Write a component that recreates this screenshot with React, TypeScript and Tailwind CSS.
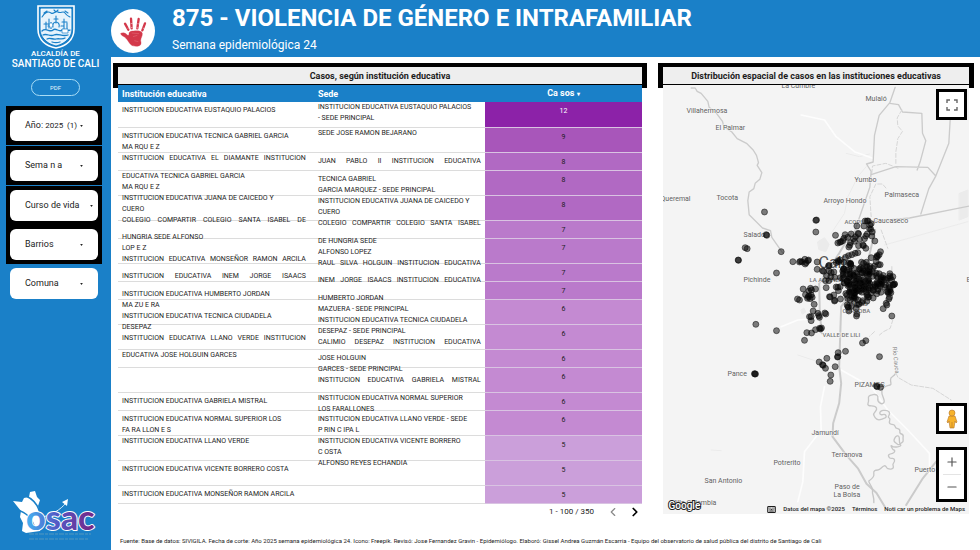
import React from 'react';
import { ChevronLeft, ChevronRight, Keyboard, Minus, Plus } from 'lucide-react';

interface Line {
  text: string;
  spread?: boolean;
}

interface Cell {
  pad: string;
  lines: Line[];
}

interface Row {
  tall: boolean;
  school?: Cell;
  site?: Cell;
  cases: number;
}

// Lines that start with "=" are spread over the full column width
const cell = (pad: string, ...texts: string[]): Cell => ({
  pad,
  lines: texts.map(t => (t.startsWith('=') ? { text: t.slice(1), spread: true } : { text: t })),
});

const rows: Row[] = [
  {
    tall: true,
    school: cell('pt-[3px]', 'INSTITUCION EDUCATIVA EUSTAQUIO PALACIOS'),
    site: cell('pt-0', 'INSTITUCION EDUCATIVA EUSTAQUIO PALACIOS', '- SEDE PRINCIPAL'),
    cases: 12,
  },
  {
    tall: true,
    school: cell('pt-[3px]', 'INSTITUCION EDUCATIVA TECNICA GABRIEL GARCIA', 'MA RQU E Z'),
    site: cell('pt-0', 'SEDE JOSE RAMON BEJARANO'),
    cases: 9,
  },
  {
    tall: false,
    school: cell('pt-0', '=INSTITUCION EDUCATIVA EL DIAMANTE INSTITUCION'),
    site: cell('pt-[3px]', '=JUAN PABLO II INSTITUCION EDUCATIVA'),
    cases: 8,
  },
  {
    tall: true,
    school: cell('pt-0', 'EDUCATIVA TECNICA GABRIEL GARCIA', 'MA RQU E Z', 'INSTITUCION EDUCATIVA JUANA DE CAICEDO Y', 'CUERO', '=COLEGIO COMPARTIR COLEGIO SANTA ISABEL DE'),
    site: cell('pt-[3px]', 'TECNICA GABRIEL', 'GARCIA MARQUEZ - SEDE PRINCIPAL'),
    cases: 8,
  },
  {
    tall: true,
    site: cell('pt-0', 'INSTITUCION EDUCATIVA JUANA DE CAICEDO Y', 'CUERO', '=COLEGIO COMPARTIR COLEGIO SANTA ISABEL'),
    cases: 8,
  },
  {
    tall: false,
    school: cell('pt-[11px]', 'HUNGRIA SEDE ALFONSO', 'LOP E Z', '=INSTITUCION EDUCATIVA MONSEÑOR RAMON ARCILA'),
    site: cell('pt-[15px]', 'DE HUNGRIA SEDE', 'ALFONSO LOPEZ', '=RAUL SILVA HOLGUIN INSTITUCION EDUCATIVA'),
    cases: 7,
  },
  { tall: true, cases: 7 },
  {
    tall: false,
    school: cell('pt-[7px]', '=INSTITUCION EDUCATIVA INEM JORGE ISAACS'),
    site: cell('pt-[11px]', '=INEM JORGE ISAACS INSTITUCION EDUCATIVA'),
    cases: 7,
  },
  {
    tall: false,
    school: cell('pt-[7px]', 'INSTITUCION EDUCATIVA HUMBERTO JORDAN', 'MA ZU E RA', 'INSTITUCION EDUCATIVA TECNICA CIUDADELA', 'DESEPAZ', '=INSTITUCION EDUCATIVA LLANO VERDE INSTITUCION'),
    site: cell('pt-[11px]', 'HUMBERTO JORDAN', 'MAZUERA - SEDE PRINCIPAL', 'INSTITUCION EDUCATIVA TECNICA CIUDADELA', 'DESEPAZ - SEDE PRINCIPAL', '=CALIMIO DESEPAZ INSTITUCION EDUCATIVA'),
    cases: 7,
  },
  { tall: true, cases: 6 },
  { tall: true, cases: 6 },
  {
    tall: false,
    school: cell('pt-0', 'EDUCATIVA JOSE HOLGUIN GARCES'),
    site: cell('pt-[3px]', 'JOSE HOLGUIN', 'GARCES - SEDE PRINCIPAL', '=INSTITUCION EDUCATIVA GABRIELA MISTRAL'),
    cases: 6,
  },
  { tall: true, cases: 6 },
  {
    tall: false,
    school: cell('pt-[3px]', 'INSTITUCION EDUCATIVA GABRIELA MISTRAL'),
    site: cell('pt-0', 'INSTITUCION EDUCATIVA NORMAL SUPERIOR', 'LOS FARALLONES'),
    cases: 6,
  },
  {
    tall: true,
    school: cell('pt-[3px]', 'INSTITUCION EDUCATIVA NORMAL SUPERIOR LOS', 'FA RA LLON E S'),
    site: cell('pt-[3px]', 'INSTITUCION EDUCATIVA LLANO VERDE - SEDE', 'P RIN C IPA L'),
    cases: 6,
  },
  {
    tall: true,
    school: cell('pt-0', 'INSTITUCION EDUCATIVA LLANO VERDE'),
    site: cell('pt-0', 'INSTITUCION EDUCATIVA VICENTE BORRERO', 'C OSTA', 'ALFONSO REYES ECHANDIA'),
    cases: 5,
  },
  { tall: true, school: cell('pt-[3px]', 'INSTITUCION EDUCATIVA VICENTE BORRERO COSTA'), cases: 5 },
  { tall: false, school: cell('pt-[3px]', 'INSTITUCION EDUCATIVA MONSEÑOR RAMON ARCILA'), cases: 5 },
];

const heat: Record<number, string> = {
  12: 'bg-[#8c22a8] text-white',
  9: 'bg-[#a856ba]',
  8: 'bg-[#b169c3]',
  7: 'bg-[#ba7acb]',
  6: 'bg-[#c48ad2]',
  5: 'bg-[#cb9fda]',
};

const CellText: React.FC<{ cell?: Cell }> = ({ cell }) => {
  if (!cell) return null;
  return (
    <div className={`relative h-0 leading-[11px] whitespace-nowrap ${cell.pad}`}>
      {cell.lines.map(l => (
        <p key={l.text} className={l.spread ? '[text-align-last:justify]' : ''}>{l.text}</p>
      ))}
    </div>
  );
};

const PanelTitle: React.FC<{ children: React.ReactNode }> = ({ children }) => (
  <h2 className="h-[25px] border-x-[5px] border-y-4 border-black bg-[#eeeeee] text-center text-[9px] leading-[18px] font-bold whitespace-nowrap">
    {children}
  </h2>
);

const Filter: React.FC<{ label: string; value?: string; wide?: boolean }> = ({ label, value, wide }) => (
  <button className={`flex h-[31px] w-full items-center justify-between rounded-md bg-white pl-[15px] text-[9px] text-[#222] ${wide ? 'pr-[5px]' : 'pr-[15px]'}`}>
    <span className="whitespace-nowrap">
      {label}
      {value && <span className="text-[8px] whitespace-pre"> {value}</span>}
    </span>
    <svg viewBox="0 0 4 3" className="h-[2px] w-[3px]"><path d="M0 0h4L2 3z" fill="#222" /></svg>
  </button>
);

const Crest = () => (
  <svg viewBox="0 0 38 44" className="h-11 w-[38px]" fill="none" stroke="#fff">
    <path d="M1 1h36v23c0 11-8 17-18 19C9 41 1 35 1 24z" strokeWidth="1.6" />
    <path d="M4 4h30v20c0 9-7 14-15 16C11 38 4 33 4 24z" fill="#e6f3fc" strokeWidth=".8" />
    <g stroke="#1a80c8" strokeWidth="1.1" strokeLinecap="round">
      <path d="M5 12c3-5 6-6 9-4s4-3 7-1 5-2 7 1 3 3 5 4M7 8l3-2M28 6l3 2M17 5l2 2 2-2" />
      <path d="M9 17v7M7 19h5M12 14v9M11 21h3M27 14v9M25 17h5M30 18v6M24 21h3" />
      <path d="M19 11v7M17 14h4M16 22c-1-3 1-5 3-5s4 2 3 5" />
      <path d="M5 26c4-4 8 2 11-1s6 3 9 0 5 2 8 0M6 30c4-2 7 2 11 0s8 2 14 0M10 34c3-2 6 1 9 0s6 1 9-1M15 37c3 1 5 1 8 0" strokeWidth="1.3" />
    </g>
    <path d="M14 17l2 3-2 4-2-4zM25 24h6v4h-6z" fill="#fff" stroke="#1a80c8" strokeWidth=".7" />
  </svg>
);

const Hand = () => (
  <svg viewBox="0 0 132 132" className="h-11 w-11 shrink-0">
    <circle cx="66" cy="66" r="66" fill="#fff" />
    <g fill="#d3384a" stroke="#d3384a" strokeLinecap="round" strokeLinejoin="round">
      <path d="M42 44l10 18M60 29l2 29M83 30l-4 28M102 43l-8 21" strokeWidth="7" fill="none" />
      <path d="M30 73c7-4 13-1 19 5 3 2 5 0 5-3-1-8 7-9 14-9 10-1 24-1 26 7 1 8-5 14-5 22 2 6 2 13-4 15-7 3-17 2-23-1-8-5-10-15-18-22-5-5-17-8-14-14z" strokeWidth="1" />
    </g>
    <path d="M50 58l5-2M59 44l6-1M60 56l5-1M79 44l6 1M77 56l5 1M95 57l5 2" stroke="#fff" strokeWidth="1.5" />
    <path d="M62 72l22 2M66 83l13-4M70 95l12 3" stroke="#e4727e" strokeWidth="1.5" />
  </svg>
);

const OsacLogo = () => (
  <svg viewBox="0 0 88 56" className="h-14 w-[88px]">
    <defs>
      <linearGradient id="osac" x1="14" x2="84" y1="0" y2="0" gradientUnits="userSpaceOnUse">
        <stop offset="0" stopColor="#45b4f2" />
        <stop offset=".45" stopColor="#5457c4" />
        <stop offset="1" stopColor="#782280" />
      </linearGradient>
    </defs>
    <path d="M1 10l9 1 2-4 5-1 1-5 5-1 2 6 3 3-2 6 2 7-1 6 3 7-2 5-14 2-4-2 1-8-3-6 1-6z" fill="#fff" />
    <path d="M14 5c9 4 14 12 15 23M5 19c9 2 16 9 18 20" fill="none" stroke="#1a80c8" strokeWidth="1.6" />
    <path d="M31 26c10-3 17-7 23-14" fill="none" stroke="#d6edfb" strokeWidth="1" />
    <path d="M50 11l6-3-1 7z" fill="#fff" />
    <text x="14" y="39" fontSize="34" fontFamily="Lato, sans-serif" fontWeight="900" fill="url(#osac)" stroke="#fff" strokeWidth="2" strokeLinejoin="round" paintOrder="stroke">osac</text>
    <path d="M17 43h62M17 48h60" stroke="#63a0bd" strokeWidth=".8" strokeDasharray="5 1 3 1" />
  </svg>
);

// Map labels: x, y, text
const towns: [number, number, string][] = [
  [687, 113, 'Villahermosa'], [716, 130, 'El Palmar'], [866, 101, 'Mulaló'], [782, 88, 'La Cumbre'],
  [855, 182, 'Yumbo'], [885, 197, 'Palmaseca'], [824, 203, 'Arroyo Hondo'], [717, 200, 'Tocota'],
  [661, 201, 'Queremal'], [744, 237, 'Salado'], [744, 282, 'Pichinde'], [874, 223, 'Caucaseco'],
  [728, 376, 'Pance'], [812, 435, 'Jamundí'], [832, 457, 'Terranova'], [774, 465, 'Potrerito'],
  [705, 483, 'San Antonio'], [835, 489, 'Paso de'], [834, 497, 'La Bolsa'], [915, 472, 'Puerto Tejada'],
  [855, 387, 'PIZAMOS'], [672, 505, 'Villa Colombia'], [967, 282, 'El'],
];

const districts: [number, number, string][] = [
  [845, 224, 'ACOPI'], [810, 282, 'LA ALIANZA'], [847, 306, 'CIUDAD'], [843, 313, 'CORDOBA'], [823, 337, 'VALLE DE LILI'],
];

// Coordinates are thirds of a map unit
const places: [number, number][] = [
  [330, 456], [335, 524], [337, 526], [272, 563], [278, 566], [251, 600], [252, 601], [380, 575], [366, 639], [304, 793], [366, 812],
  [484, 481], [486, 480], [484, 516], [543, 526], [556, 547], [572, 524], [590, 522], [607, 498], [611, 520], [612, 522],
  [628, 498], [638, 483], [632, 483], [646, 495], [649, 508], [653, 516], [638, 522], [634, 528], [652, 528], [661, 543],
  [565, 542], [560, 545], [550, 549], [580, 532], [597, 536], [600, 544], [588, 548], [583, 561], [586, 556], [612, 557],
  [625, 555], [627, 557], [634, 565], [615, 538], [630, 536], [645, 506], [568, 535], [641, 483], [650, 491], [603, 530],
  [573, 592], [582, 587], [592, 584], [602, 580], [610, 578], [678, 575], [674, 584], [669, 590], [650, 593], [665, 605],
  [672, 614], [677, 614], [660, 618], [668, 587], [666, 592], [557, 600], [553, 605], [545, 608], [568, 607], [551, 602],
  [415, 605], [435, 606], [438, 604], [451, 598], [462, 600], [460, 602], [455, 608], [452, 612], [443, 606], [488, 606],
  [524, 616], [522, 618], [488, 628], [504, 632], [507, 634], [523, 632], [538, 636], [541, 652], [529, 650], [516, 647],
  [523, 662], [513, 662], [530, 638], [515, 683], [525, 710], [527, 711], [538, 705], [545, 681], [541, 721], [558, 717],
  [540, 723], [557, 680], [550, 682], [446, 687], [468, 685], [471, 690], [483, 687], [463, 693], [453, 704], [461, 710],
  [470, 705], [473, 712], [467, 716], [459, 715], [464, 708], [429, 717], [435, 720], [479, 733], [476, 753], [470, 770],
  [465, 770], [470, 782], [493, 767], [495, 772], [490, 760], [511, 759], [514, 762], [457, 818], [471, 819], [483, 809],
  [495, 805], [501, 804], [498, 807], [450, 841], [624, 849], [634, 842], [675, 890], [573, 874], [551, 878], [550, 890],
  [549, 891], [517, 895], [494, 906], [504, 914], [513, 925], [506, 916], [542, 920], [529, 945], [527, 964], [301, 942],
  [303, 942], [300, 941], [666, 978], [678, 982], [668, 980], [580, 740], [578, 735], [583, 753], [591, 738], [605, 745],
  [606, 768], [607, 762], [613, 733], [582, 742], [599, 712], [611, 720], [625, 722], [639, 705], [640, 712], [656, 714],
  [686, 746], [697, 735], [695, 730], [703, 717], [705, 712], [712, 768], [706, 641], [715, 650], [720, 672], [711, 660],
  [709, 698], [698, 695], [717, 675], [706, 648], [700, 655], [674, 641], [587, 720], [597, 718], [592, 710], [603, 715],
];

const scatter = (cx: number, cy: number, rx: number, ry: number, count: number, seed: number) => {
  let s = seed;
  const next = () => {
    s = (s * 16807) % 2147483647;
    return s / 2147483647;
  };
  return Array.from({ length: count }, (): [number, number] => {
    const a = next() * Math.PI * 2;
    const r = Math.sqrt(next());
    return [cx + Math.cos(a) * r * rx, cy + Math.sin(a) * r * ry];
  });
};

const dots = [
  ...places,
  ...scatter(610, 635, 50, 38, 34, 71),
  ...scatter(578, 672, 32, 42, 28, 913),
  ...scatter(635, 660, 48, 40, 46, 4021),
  ...scatter(665, 675, 55, 36, 42, 557),
  ...scatter(610, 708, 38, 28, 20, 2203),
];

const CaliMap = () => (
  <svg viewBox="663 85 307 429" preserveAspectRatio="xMidYMid slice" className="block h-[429px] w-full bg-[#f4f4f4]" role="img" aria-label="Mapa de casos">
    <g transform="translate(655 60) scale(.33333)" fill="none" strokeLinejoin="round" strokeLinecap="round">
      <g stroke="#ebebeb" strokeWidth="3">
        <path d="M490 545l20-12 14 20-10 22-20-6zM440 750l8-6 6 12-10 6zM915 400l25-10v80l-25 10z" fill="#ebebeb" />
        <path d="M575 280l40 10 30-8M170 1170l30 2M530 520l40-60 10-50 30-60 25-30M430 885l60 20 25 30M690 555l250-70" />
      </g>
      <g stroke="#fdfdfd" strokeWidth="5">
        <path d="M440 165l70 15 35 50 55 45 55 20M510 980l-12 60 2 70-50 65-5 90-15 60M560 930l90 50 50 70 60 60 65 70v60M380 800l50-20 60-5" />
      </g>
      <g stroke="#cbcbcb" strokeWidth="4">
        <path d="M110 84l12 0 6 10 12 6 20 24 4 18 22 18 18 24 4 16 24 16 16 20 28 14 20 20 10 16 6 22-4 8 14 22-6 20-14 12-4 16-14 10-4 26 4 42 22 22 18 18 24 8 4 20 32 46" />
        <path d="M722 82l-16 46-32 38-14 60-4 80-20 6 14 22-4 48-38 110-10 30M706 130l26 4 12 22 58 4 2 60 10 22-16 60-10 28M650 344l74-24 96 2 24 26M887 180l-4 70-40 100-20 36-24 76M945 438l-180 36-110 10" />
        <path d="M590 520l-36 60-60 90 2 90 6 60M662 510l-30 130-72 100-6 180 6 50-6 60-18 60-2 40 42 56 35 40 25 45 30 28 25 41M845 1205l-40 50-50 80" strokeWidth="6" />
      </g>
      <g stroke="#d6d6d6" strokeWidth="3">
        <path d="M742 150l-14 24 2 24 14 16-14 22-6 40v40M652 340l2-22 40-8 40 16M650 470l-4-60 18-38 20 0 12 14M680 510l20 55M712 620v60M715 780l-8 25-20 10-12 10M660 815l-15 14" strokeDasharray="12 6" />
        <path d="M725 940l5 12 40 23 65 10 55 35" strokeDasharray="12 5" />
        <path d="M723 940c-4 12-16 8-15 20s4 14-4 16-20 4-22 18 12 26 6 34-20-2-18-12-4-14-14-12-16 2-14 14-6 14 0 18 20-2 24 8-12 12-8 22 12 16 22 12 18-4 14-12-16 4-18-6 22-12 28-4-8 14 0 18-6 14 4 18 12-2 14 8 16 2 14 14 12 4 10 16 4 14-4 18-6 10-14 4-12-8-8-16 12-12 14-4-2 16 4 22-20 10-26 4 2 12 6 12 4 8-4 10-16 4-10 12 14-2 16 8-8 8-4 18-10 10-16 8-4-12-12-8-10 12-18 12-14 2-12 12-8 16-14 20 12 18 10 30 6 18 4 36" stroke="#c6c6c6" strokeWidth="4" />
      </g>
    </g>
    <g fontFamily="Roboto, sans-serif" fill="#616161" stroke="#f7f7f7" strokeWidth="1" paintOrder="stroke">
      <g fontSize="7">
        {towns.map(([x, y, name]) => <text key={name} x={x} y={y}>{name}</text>)}
      </g>
      <g fontSize="6" fontWeight="500" fill="#777">
        {districts.map(([x, y, name]) => <text key={name} x={x} y={y}>{name}</text>)}
      </g>
      <text x="893" y="347" fontSize="6" fill="#8a8a8a" transform="rotate(84 893 347)">Río Cauca</text>
      <text x="819" y="268" fontSize="16" fill="#555">Cali</text>
    </g>
    <g transform="translate(655 60) scale(.33333)" fill="#000" fillOpacity=".5" stroke="#111" strokeWidth="2" strokeOpacity=".8">
      {dots.map(([x, y], i) => <circle key={i} cx={x} cy={y} r="9" />)}
    </g>
    <text x="669" y="509" fontSize="10" fontFamily="Roboto, sans-serif" fontWeight="500" fill="#fff" stroke="#222" strokeWidth="2" paintOrder="stroke">Google</text>
  </svg>
);

const App: React.FC = () => {
  return (
    <div className="flex min-h-screen bg-white font-['Roboto',sans-serif] text-[#1c1c1c]">
      <aside className="flex w-[111px] shrink-0 flex-col bg-[#1a80c8] text-white">
        <div className="flex flex-col items-center pt-[5px]">
          <Crest />
          <p className="text-center text-[10px] leading-[10px] font-medium whitespace-nowrap">
            <span className="block text-[8px]">ALCALDÍA DE</span>
            SANTIAGO DE CALI
          </p>
          <button className="mt-[10px] h-[17px] w-[49px] rounded-full border border-[#a8dcf5] text-[6px] text-[#e3f4fd]">PDF</button>
        </div>

        {/* Filters */}
        <div className="mt-[10px] flex flex-col gap-px pr-[9px] pl-[6px]">
          <div className="bg-black p-1"><Filter label="Año:" value="2025  (1)" /></div>
          <div className="bg-black p-1"><Filter label="Sema n a" /></div>
          <div className="flex flex-col gap-2 bg-black p-1">
            <Filter label="Curso de vida" wide />
            <Filter label="Barrios" />
          </div>
          <div className="px-1 pt-[3px]"><Filter label="Comuna" /></div>
        </div>

        <div className="mt-auto pb-[3px] pl-3"><OsacLogo /></div>
      </aside>

      <div className="flex min-w-0 flex-1 flex-col">
        <header className="flex h-[57px] items-center gap-[17px] bg-[#1a80c8] pt-[5px] text-white">
          <Hand />
          <div>
            <h1 className="text-[24px] leading-[26px] font-bold">875 - VIOLENCIA DE GÉNERO E INTRAFAMILIAR</h1>
            <p className="mt-[2px] text-[12px] leading-[24px]">Semana epidemiológica 24</p>
          </div>
        </header>

        <main className="grid grid-cols-[534fr_316fr] items-start gap-[11px] pt-[6px] pr-[6px] pl-[2px]">
          <section>
            <PanelTitle>Casos, según institución educativa</PanelTitle>
            <div className="relative mx-[5px] -mt-[3px]">
              <table className="w-full table-fixed border-collapse text-left text-[7px]">
                <thead>
                  <tr className="h-4 bg-[#1a80c8] text-[9px] leading-4 text-white">
                    <th className="w-[37%] pl-1">Institución educativa</th>
                    <th className="w-[33%] pl-[6px]">Sede</th>
                    <th className="w-[30%] text-center">Ca sos <span className="text-[6px]">▾</span></th>
                  </tr>
                </thead>
                <tbody>
                  {rows.map((r, i) => (
                    <tr key={i} className={r.tall ? 'h-[25px]' : 'h-[18px]'}>
                      <td className="border-b border-[#dcdcdc] p-0 pr-[6px] pl-1 align-top"><CellText cell={r.school} /></td>
                      <td className="border-b border-[#dcdcdc] p-0 pr-1 pl-[6px] align-top"><CellText cell={r.site} /></td>
                      <td className={`border-b border-[#d9c3e2] p-0 pt-1 text-center align-top leading-[11px] ${heat[r.cases]}`}>{r.cases}</td>
                    </tr>
                  ))}
                </tbody>
              </table>
              <div className="flex items-center justify-end pt-[1px] text-[8px]">
                <span className="mr-[12px]">1 - 100 / 350</span>
                <button aria-label="Anterior" className="mr-2 text-[#888]"><ChevronLeft className="h-[14px] w-[14px]" /></button>
                <button aria-label="Siguiente" className="text-black"><ChevronRight className="h-[14px] w-[14px]" strokeWidth={3} /></button>
              </div>
            </div>
          </section>

          <section>
            <PanelTitle>Distribución espacial de casos en las instituciones educativas</PanelTitle>
            <div className="relative mx-[5px] -mt-[3px]">
              <CaliMap />
              <button aria-label="Pantalla completa" className="absolute top-[4px] right-[2px] flex h-[31px] w-[31px] items-center justify-center border-[3px] border-black bg-white">
                <svg viewBox="0 0 12 12" className="h-3 w-3" fill="none" stroke="#666" strokeWidth="1.4"><path d="M1 4V1h3M8 1h3v3M11 8v3H8M4 11H1V8" /></svg>
              </button>
              <button aria-label="Street View" className="absolute right-[2px] bottom-[80px] flex h-[31px] w-[31px] items-center justify-center border-[3px] border-black bg-white">
                <svg viewBox="0 0 12 20" className="h-5 w-3" fill="#f7b32b" stroke="#b5762a" strokeWidth=".6">
                  <path d="M3 7h6l2 6-1 1-1-2-1 7H4l-1-7-1 2-1-1z" />
                  <circle cx="6" cy="4" r="3" />
                  <path d="M6 13v6" />
                </svg>
              </button>
              <div className="absolute right-[2px] bottom-[12px] flex h-[55px] w-[31px] flex-col items-center border-[3px] border-black bg-white text-[#555]">
                <button aria-label="Acercar" className="flex flex-1 items-center"><Plus className="h-[14px] w-[14px]" /></button>
                <span className="h-px w-[18px] bg-[#e4e4e4]" />
                <button aria-label="Alejar" className="flex flex-1 items-center"><Minus className="h-[14px] w-[14px]" /></button>
              </div>
              <div className="absolute right-1 bottom-0 flex items-center gap-[7px] text-[6px] leading-[10px] font-medium whitespace-nowrap">
                <Keyboard className="h-[9px] w-[9px]" strokeWidth={3} />
                <span>Datos del mapa ©2025</span>
                <a href="#terminos">Términos</a>
                <a href="#problema">Noti car un problema de Maps</a>
              </div>
            </div>
          </section>
        </main>

        <footer className="mt-auto pb-[3px] pl-[9px] text-[6px] leading-[12px]">
          Fuente: Base de datos: SIVIGILA. Fecha de corte: Año 2025 semana epidemiológica 24. Icono: Freepik. Revisó: Jose Fernandez Gravin - Epidemiólogo. Elaboró: Gissel Andrea Guzmán Escarria - Equipo del observatorio de salud pública del distrito de Santiago de Cali
        </footer>
      </div>
    </div>
  );
};

export default App;
